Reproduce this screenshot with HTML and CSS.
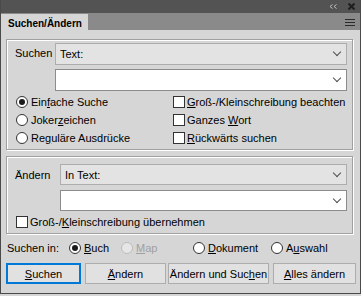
FILE: index.html
```html
<!DOCTYPE html>
<html lang="de">
<head>
    <meta charset="UTF-8">
    <meta name="viewport" content="width=device-width, initial-scale=1.0">
    <title>Suchen/Ändern</title>
    <link rel="stylesheet" href="styles.css">
</head>
<body>
    <div class="panel">
        <div class="titlebar">
            <svg class="collapse" width="8" height="5" viewBox="0 0 8 5">
                <polyline points="3.5,0.5 1,2.5 3.5,4.5" />
                <polyline points="7.5,0.5 5,2.5 7.5,4.5" />
            </svg>
            <svg class="close" width="7" height="7" viewBox="0 0 7 7">
                <line x1="0.5" y1="0.5" x2="6.5" y2="6.5" />
                <line x1="6.5" y1="0.5" x2="0.5" y2="6.5" />
            </svg>
        </div>

        <div class="tabbar">
            <div class="tab">Suchen/Ändern</div>
            <svg class="menu" width="10" height="7" viewBox="0 0 10 7">
                <rect x="0" y="0" width="10" height="1" />
                <rect x="0" y="3" width="10" height="1" />
                <rect x="0" y="6" width="10" height="1" />
            </svg>
        </div>

        <div class="content">
            <div class="group group-find">
                <div class="field-row">
                    <div class="field-label">Suchen</div>
                    <div class="select grey"><span>Text:</span><span class="chev"></span></div>
                </div>
                <div class="field-row second">
                    <div class="field-label"></div>
                    <div class="select white"><span></span><span class="chev"></span></div>
                </div>

                <div class="options">
                    <div class="opt"><span class="radio on"></span><span>Ein<u>f</u>ache Suche</span></div>
                    <div class="opt"><span class="check"></span><span><u>G</u>roß-/Kleinschreibung beachten</span></div>
                    <div class="opt"><span class="radio"></span><span>Joker<u>z</u>eichen</span></div>
                    <div class="opt"><span class="check"></span><span>Ganzes <u>W</u>ort</span></div>
                    <div class="opt"><span class="radio"></span><span>Re<u>g</u>uläre Ausdrücke</span></div>
                    <div class="opt"><span class="check"></span><span><u>R</u>ückwärts suchen</span></div>
                </div>
            </div>

            <div class="group group-replace">
                <div class="field-row">
                    <div class="field-label">Ändern</div>
                    <div class="select grey"><span>In Text:</span><span class="chev"></span></div>
                </div>
                <div class="field-row second">
                    <div class="field-label"></div>
                    <div class="select white"><span></span><span class="chev"></span></div>
                </div>
                <div class="opt single"><span class="check"></span><span>Groß-/<u>K</u>leinschreibung übernehmen</span></div>
            </div>

            <div class="scope">
                <div class="scope-label">Suchen in:</div>
                <div class="opt scope-book"><span class="radio on"></span><span><u>B</u>uch</span></div>
                <div class="opt scope-map disabled"><span class="radio"></span><span><u>M</u>ap</span></div>
                <div class="opt scope-doc"><span class="radio"></span><span><u>D</u>okument</span></div>
                <div class="opt"><span class="radio"></span><span>A<u>u</u>swahl</span></div>
            </div>

            <div class="buttons">
                <button class="btn primary btn-find"><u>S</u>uchen</button>
                <button class="btn btn-replace"><u>Ä</u>ndern</button>
                <button class="btn btn-both">Ändern und Suc<u>h</u>en</button>
                <button class="btn btn-all"><u>A</u>lles ändern</button>
            </div>
        </div>
    </div>
</body>
</html>
```

FILE: styles.css
```css
body {
    margin: 0;
    font-family: "Liberation Sans", Arial, sans-serif;
    font-size: 11px;
    color: #000;
    background-color: #d6d6d6;
}

.panel {
    width: 361px;
    height: 294px;
    box-sizing: border-box;
    border: 1px solid #4a4a4a;
    border-top: 0;
    background-color: #d6d6d6;
    display: flex;
    flex-direction: column;
}

/* title bar */
.titlebar {
    height: 13px;
    background-color: #535353;
    display: flex;
    justify-content: flex-end;
    align-items: center;
    gap: 11px;
    padding-right: 5px;
}

.collapse polyline {
    fill: none;
    stroke: #bdbdbd;
    stroke-width: 1;
}

.close line {
    stroke: #1f1f1f;
    stroke-width: 2;
}

/* tabs */
.tabbar {
    height: 17px;
    background-color: #8a8a8a;
    display: flex;
    justify-content: space-between;
    align-items: flex-end;
}

.tab {
    width: 87px;
    height: 16px;
    box-sizing: border-box;
    background-color: #d6d6d6;
    font-size: 10px;
    font-weight: bold;
    padding: 4px 0 0 7px;
}

.menu {
    align-self: flex-start;
    margin: 6px 5px 0 0;
    fill: #2b2b2b;
}

/* content */
.content {
    padding: 9px 0 0 5px;
}

.group {
    width: 347px;
    box-sizing: border-box;
    border: 1px solid #a0a0a0;
    box-shadow: inset 1px 1px 0 #fff, 1px 1px 0 #fff;
}

.group-find {
    height: 111px;
    padding-top: 3px;
}

.group-replace {
    height: 78px;
    margin-top: 6px;
    padding-top: 7px;
}

.field-row {
    display: flex;
}

.field-row.second {
    margin-top: 4px;
}

.group-replace .field-row.second {
    margin-top: 5px;
}

.field-label {
    width: 48px;
    box-sizing: border-box;
    padding: 4px 0 0 8px;
}

.group-replace .field-label {
    width: 53px;
    padding-top: 5px;
}

.select {
    width: 292px;
    height: 22px;
    box-sizing: border-box;
    border: 1px solid #adadad;
    display: flex;
    justify-content: space-between;
    align-items: center;
    padding: 0 5px 0 4px;
}

.group-replace .select {
    width: 287px;
    height: 21px;
}

.select.grey {
    background-color: #e3e3e3;
}

.select.white {
    background-color: #fff;
    border-color: #8c8c8c;
}

.chev {
    width: 5px;
    height: 5px;
    border-right: 1px solid #505050;
    border-bottom: 1px solid #505050;
    transform: rotate(45deg);
    margin: 0 1px 4px 0;
}

/* radios and checkboxes */
.options {
    display: grid;
    grid-template-columns: 166px 1fr;
    grid-auto-rows: 18px;
    margin-top: 2px;
}

.options .opt:nth-child(odd) {
    padding-left: 9px;
}

.opt {
    display: flex;
    align-items: center;
    height: 18px;
}

.opt.single {
    margin-top: 2px;
    padding-left: 9px;
}

.radio {
    width: 12px;
    height: 12px;
    box-sizing: border-box;
    border: 1px solid #333;
    border-radius: 50%;
    background-color: #fff;
    margin-right: 3px;
    display: flex;
    justify-content: center;
    align-items: center;
}

.radio.on::after {
    content: "";
    width: 6px;
    height: 6px;
    border-radius: 50%;
    background-color: #1a1a1a;
}

.check {
    width: 12px;
    height: 12px;
    box-sizing: border-box;
    border: 1px solid #333;
    background-color: #fff;
    margin-right: 2px;
}

.disabled {
    color: #a0a0a0;
}

.disabled .radio {
    border-color: #bcbcbc;
    background-color: #e6e6e6;
}

/* search scope */
.scope {
    display: flex;
    margin-top: 5px;
}

.scope-label {
    width: 63px;
    box-sizing: border-box;
    padding-left: 1px;
    line-height: 18px;
}

.scope-book {
    width: 52px;
}

.scope-map {
    width: 72px;
}

.scope-doc {
    width: 78px;
}

/* buttons */
.buttons {
    display: flex;
    margin-top: 6px;
}

.btn {
    height: 21px;
    box-sizing: border-box;
    border: 1px solid #adadad;
    background-color: #e1e1e1;
    font-family: inherit;
    font-size: 11px;
    color: #000;
    padding: 0;
}

.btn.primary {
    border: 2px solid #0078d7;
}

.btn-find {
    width: 75px;
}

.btn-replace {
    width: 81px;
    margin-left: 4px;
}

.btn-both {
    width: 101px;
    margin-left: 2px;
}

.btn-all {
    width: 83px;
    margin-left: 4px;
}
```
